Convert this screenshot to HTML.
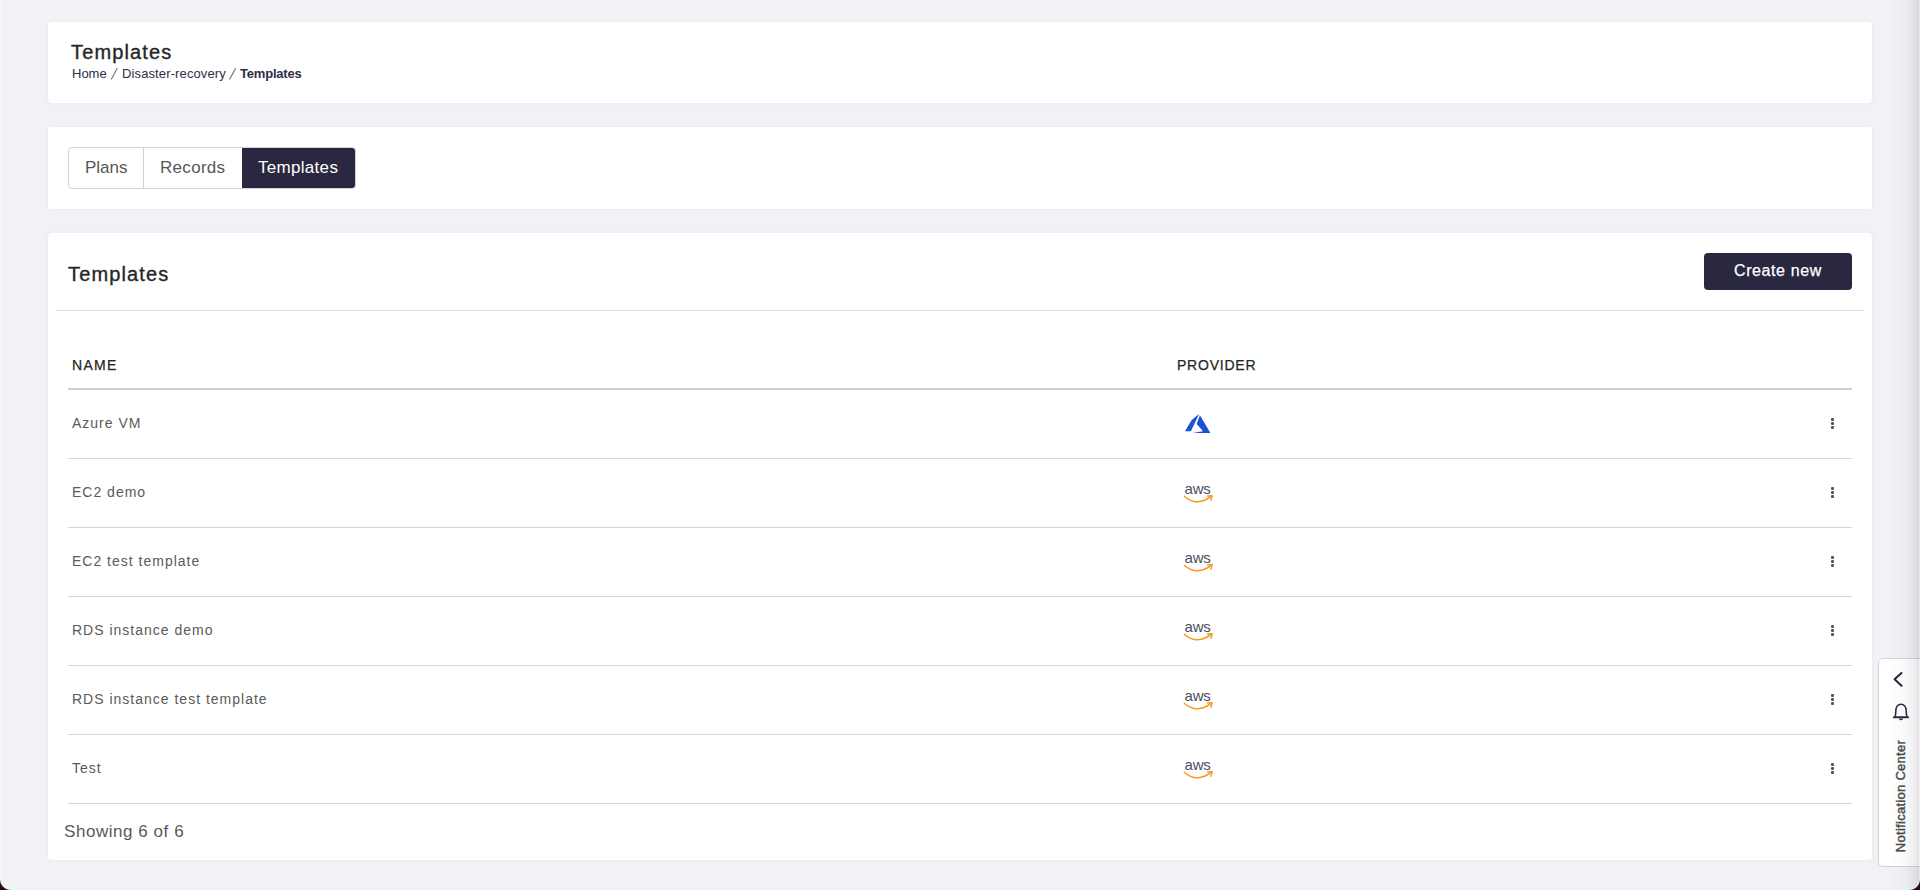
<!DOCTYPE html>
<html><head><meta charset="utf-8">
<style>
*{margin:0;padding:0;box-sizing:border-box}
html,body{width:1920px;height:890px;overflow:hidden;background:#f1f2f6;font-family:"Liberation Sans",sans-serif;position:relative}
.abs{position:absolute;white-space:nowrap}
.card{position:absolute;background:#fff;border-radius:4px;box-shadow:0 0 5px rgba(20,20,60,0.045)}
.t{position:absolute;white-space:nowrap;line-height:1}
.hline{position:absolute;height:1px;background:#d6d6d6}
.name{position:absolute;left:72px;font-size:14px;color:#5a5a5a;letter-spacing:1.0px;line-height:1}
.kebab{position:absolute;left:1831px;width:3px}
.kebab i{display:block;width:3px;height:3px;background:#555;border-radius:1px;margin-bottom:1px}
.aws{position:absolute;left:1182px}
</style></head><body>

<!-- card 1 -->
<div class="card" style="left:48px;top:22px;width:1824px;height:81px"></div>
<div class="t" style="left:71px;top:42px;font-size:20px;color:#262626;letter-spacing:1.15px;-webkit-text-stroke:0.35px #262626">Templates</div>
<div class="t" style="left:72px;top:67px;font-size:13px;color:#2f2e47">Home</div>
<svg class="abs" style="left:108px;top:66px" width="12" height="16"><path d="M9.3 2.2 L3.2 13.6" stroke="#707070" stroke-width="1.1"/></svg>
<div class="t" style="left:122px;top:67px;font-size:13px;color:#2f2e47;letter-spacing:0.12px">Disaster-recovery</div>
<svg class="abs" style="left:227px;top:66px" width="12" height="16"><path d="M8.6 2.2 L2.5 13.6" stroke="#707070" stroke-width="1.1"/></svg>
<div class="t" style="left:240px;top:67px;font-size:13px;color:#2f2e47;font-weight:bold;letter-spacing:-0.2px">Templates</div>

<!-- card 2 -->
<div class="card" style="left:48px;top:127px;width:1824px;height:82px"></div>
<div class="abs" style="left:68px;top:147px;width:288px;height:42px;border:1px solid #d3d3d3;border-radius:4px"></div>
<div class="abs" style="left:143px;top:148px;width:1px;height:40px;background:#d3d3d3"></div>
<div class="abs" style="left:242px;top:148px;width:113px;height:40px;background:#2a2840;border-radius:0 3px 3px 0"></div>
<div class="t" style="left:85px;top:159px;font-size:17px;color:#585858">Plans</div>
<div class="t" style="left:160px;top:159px;font-size:17px;color:#585858;letter-spacing:0.3px">Records</div>
<div class="t" style="left:258px;top:159px;font-size:17px;color:#fff;letter-spacing:0.3px">Templates</div>

<!-- card 3 -->
<div class="card" style="left:48px;top:233px;width:1824px;height:627px"></div>
<div class="t" style="left:68px;top:264px;font-size:20px;color:#262626;letter-spacing:1.15px;-webkit-text-stroke:0.35px #262626">Templates</div>
<div class="abs" style="left:1704px;top:253px;width:148px;height:37px;background:#2a2840;border-radius:4px"></div>
<div class="t" style="left:1734px;top:263px;font-size:16px;color:#fff;letter-spacing:0.6px;-webkit-text-stroke:0.25px #fff">Create new</div>
<div class="hline" style="left:56px;top:310px;width:1808px;background:#dcdcdc"></div>

<div class="t" style="left:72px;top:358px;font-size:14px;color:#262626;letter-spacing:1.3px;-webkit-text-stroke:0.25px #262626">NAME</div>
<div class="t" style="left:1177px;top:358px;font-size:14px;color:#262626;letter-spacing:0.78px;-webkit-text-stroke:0.25px #262626">PROVIDER</div>
<div class="abs" style="left:68px;top:388px;width:1784px;height:2px;background:#d0d0d0"></div>

<!-- rows -->
<div class="name" style="top:416px">Azure VM</div>
<div class="name" style="top:485px">EC2 demo</div>
<div class="name" style="top:554px">EC2 test template</div>
<div class="name" style="top:623px">RDS instance demo</div>
<div class="name" style="top:692px">RDS instance test template</div>
<div class="name" style="top:761px">Test</div>

<div class="hline" style="left:68px;top:458px;width:1784px"></div>
<div class="hline" style="left:68px;top:527px;width:1784px"></div>
<div class="hline" style="left:68px;top:596px;width:1784px"></div>
<div class="hline" style="left:68px;top:665px;width:1784px"></div>
<div class="hline" style="left:68px;top:734px;width:1784px"></div>
<div class="hline" style="left:68px;top:803px;width:1784px"></div>

<div class="kebab" style="top:418px"><i></i><i></i><i></i></div>
<div class="kebab" style="top:487px"><i></i><i></i><i></i></div>
<div class="kebab" style="top:556px"><i></i><i></i><i></i></div>
<div class="kebab" style="top:625px"><i></i><i></i><i></i></div>
<div class="kebab" style="top:694px"><i></i><i></i><i></i></div>
<div class="kebab" style="top:763px"><i></i><i></i><i></i></div>

<div class="t" style="left:64px;top:823px;font-size:17px;color:#5a5a5a;letter-spacing:0.55px">Showing 6 of 6</div>

<svg class="abs" style="left:1185px;top:414px" width="25.6" height="19.3" viewBox="0 0 19.68 15.24" preserveAspectRatio="none"><path fill="#1f4fd6" d="M9.105 14.43l4.642-.82.043-.01-2.387-2.84a403.945 403.945 0 0 1-2.387-2.853c0-.014 2.465-6.802 2.479-6.826.004-.008 1.682 2.888 4.066 7.02l4.09 7.09.031.054-15.19-.002 4.713-.814zM0 13.566c0-.004 1.127-1.96 2.502-4.348L5.002 4.88l2.914-2.446C9.518 1.088 10.836.01 10.845.008a.512.512 0 0 1-.046.117L7.636 6.907 4.53 13.566l-2.265.003c-1.245.002-2.265 0-2.265-.003z"/></svg>
<svg class="abs" style="left:1182px;top:482px" width="32" height="22" viewBox="0 0 32 22"><text x="2.6" y="12.2" font-family="Liberation Sans" font-size="15" fill="#4e4d62" letter-spacing="-0.2">aws</text><path d="M2.3 14.2 C7 18.5 12 20 16 19.8 C20 19.6 24 18 28.2 15.2" fill="none" stroke="#f7981d" stroke-width="1.5" stroke-linecap="round"/><path d="M25.6 14 L30.2 13.8 L28.9 18.2" fill="none" stroke="#f7981d" stroke-width="1.4" stroke-linecap="round" stroke-linejoin="round"/></svg>
<svg class="abs" style="left:1182px;top:551px" width="32" height="22" viewBox="0 0 32 22"><text x="2.6" y="12.2" font-family="Liberation Sans" font-size="15" fill="#4e4d62" letter-spacing="-0.2">aws</text><path d="M2.3 14.2 C7 18.5 12 20 16 19.8 C20 19.6 24 18 28.2 15.2" fill="none" stroke="#f7981d" stroke-width="1.5" stroke-linecap="round"/><path d="M25.6 14 L30.2 13.8 L28.9 18.2" fill="none" stroke="#f7981d" stroke-width="1.4" stroke-linecap="round" stroke-linejoin="round"/></svg>
<svg class="abs" style="left:1182px;top:620px" width="32" height="22" viewBox="0 0 32 22"><text x="2.6" y="12.2" font-family="Liberation Sans" font-size="15" fill="#4e4d62" letter-spacing="-0.2">aws</text><path d="M2.3 14.2 C7 18.5 12 20 16 19.8 C20 19.6 24 18 28.2 15.2" fill="none" stroke="#f7981d" stroke-width="1.5" stroke-linecap="round"/><path d="M25.6 14 L30.2 13.8 L28.9 18.2" fill="none" stroke="#f7981d" stroke-width="1.4" stroke-linecap="round" stroke-linejoin="round"/></svg>
<svg class="abs" style="left:1182px;top:689px" width="32" height="22" viewBox="0 0 32 22"><text x="2.6" y="12.2" font-family="Liberation Sans" font-size="15" fill="#4e4d62" letter-spacing="-0.2">aws</text><path d="M2.3 14.2 C7 18.5 12 20 16 19.8 C20 19.6 24 18 28.2 15.2" fill="none" stroke="#f7981d" stroke-width="1.5" stroke-linecap="round"/><path d="M25.6 14 L30.2 13.8 L28.9 18.2" fill="none" stroke="#f7981d" stroke-width="1.4" stroke-linecap="round" stroke-linejoin="round"/></svg>
<svg class="abs" style="left:1182px;top:758px" width="32" height="22" viewBox="0 0 32 22"><text x="2.6" y="12.2" font-family="Liberation Sans" font-size="15" fill="#4e4d62" letter-spacing="-0.2">aws</text><path d="M2.3 14.2 C7 18.5 12 20 16 19.8 C20 19.6 24 18 28.2 15.2" fill="none" stroke="#f7981d" stroke-width="1.5" stroke-linecap="round"/><path d="M25.6 14 L30.2 13.8 L28.9 18.2" fill="none" stroke="#f7981d" stroke-width="1.4" stroke-linecap="round" stroke-linejoin="round"/></svg>

<!-- notification panel -->
<div class="abs" style="left:1878px;top:658px;width:60px;height:209px;background:#fff;border:1px solid #d2d2d8;border-radius:5px"></div>
<svg class="abs" style="left:1890px;top:668px" width="16" height="24" viewBox="0 0 16 24"><path d="M11.5 5 L4.6 11.3 L11.5 17.8" fill="none" stroke="#24233a" stroke-width="2" stroke-linecap="round" stroke-linejoin="round"/></svg>
<svg class="abs" style="left:1890px;top:700px" width="22" height="24" viewBox="0 0 22 24"><path d="M4.8 17.2 C5.8 15.6 5.8 14 5.8 11 C5.8 6.8 8 4.2 11 4.2 C14 4.2 16.2 6.8 16.2 11 C16.2 14 16.2 15.6 17.2 17.2 Z" fill="none" stroke="#2a2940" stroke-width="1.6" stroke-linejoin="round"/><path d="M3.6 17.4 H18.4" stroke="#2a2940" stroke-width="1.6" stroke-linecap="round"/><path d="M9.4 18.6 Q11 20.6 12.6 18.6" fill="none" stroke="#2a2940" stroke-width="1.5"/></svg>
<div class="abs" style="left:1900px;top:796px;width:0;height:0">
 <div class="t" style="position:absolute;left:0;top:0;transform:translate(-50%,-50%) rotate(-90deg);font-size:13px;color:#4a4a4a;letter-spacing:0.28px;-webkit-text-stroke:0.4px #4a4a4a">Notification Center</div>
</div>
<!-- right edge shade -->
<div class="abs" style="left:1888px;top:0;width:32px;height:890px;background:linear-gradient(to right,rgba(40,40,70,0) 0%,rgba(40,40,70,0.015) 35%,rgba(40,40,70,0.04) 62%,rgba(40,40,70,0.08) 82%,rgba(40,40,70,0.12) 95%,rgba(40,40,70,0.13) 97%,rgba(255,255,255,0.2) 100%)"></div>
<!-- window corners -->
<div class="abs" style="left:0;top:879px;width:11px;height:11px;background:radial-gradient(circle at 11px 0px, rgba(0,0,0,0) 9.6px, rgba(255,255,255,0.85) 10.4px, #2a0b14 11.6px)"></div>
<div class="abs" style="left:0;top:0;width:1px;height:880px;background:rgba(255,255,255,0.45)"></div>
<div class="abs" style="left:1909px;top:879px;width:11px;height:11px;background:radial-gradient(circle at 0px 0px, rgba(0,0,0,0) 9.6px, rgba(255,255,255,0.85) 10.4px, #2a0b14 11.6px)"></div>
</body></html>
